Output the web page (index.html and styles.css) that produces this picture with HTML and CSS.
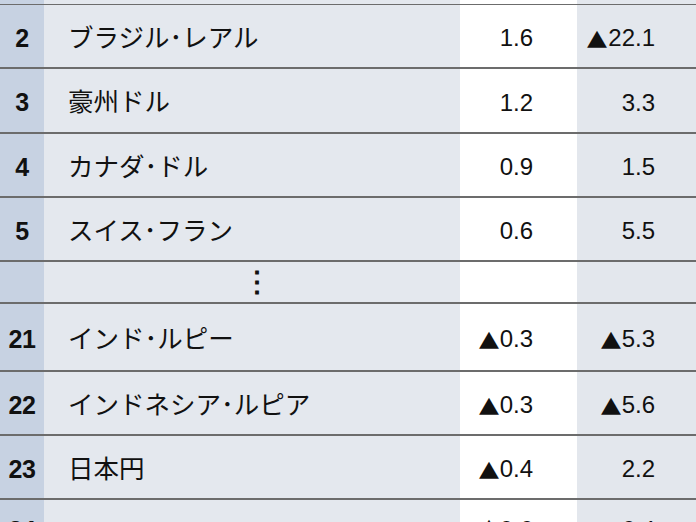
FILE: index.html
```html
<!DOCTYPE html>
<html lang="ja">
<head>
<meta charset="utf-8">
<link rel="stylesheet" href="styles.css">
</head>
<body>
<div class="table">
  <div class="row stub"><div class="rank"></div><div class="name"></div><div class="v1"></div><div class="v2"></div></div>
  <div class="row"><div class="rank">2</div><div class="name">ブラジル･レアル</div><div class="v1">1.6</div><div class="v2"><span class="tri">▲</span>22.1</div></div>
  <div class="row r65"><div class="rank">3</div><div class="name">豪州ドル</div><div class="v1">1.2</div><div class="v2">3.3</div></div>
  <div class="row"><div class="rank">4</div><div class="name">カナダ･ドル</div><div class="v1">0.9</div><div class="v2">1.5</div></div>
  <div class="row"><div class="rank">5</div><div class="name">スイス･フラン</div><div class="v1">0.6</div><div class="v2">5.5</div></div>
  <div class="row gap"><div class="rank"></div><div class="name ellipsis">⋮</div><div class="v1"></div><div class="v2"></div></div>
  <div class="row r68"><div class="rank">21</div><div class="name">インド･ルピー</div><div class="v1"><span class="tri">▲</span>0.3</div><div class="v2"><span class="tri">▲</span>5.3</div></div>
  <div class="row"><div class="rank">22</div><div class="name">インドネシア･ルピア</div><div class="v1"><span class="tri">▲</span>0.3</div><div class="v2"><span class="tri">▲</span>5.6</div></div>
  <div class="row"><div class="rank">23</div><div class="name">日本円</div><div class="v1"><span class="tri">▲</span>0.4</div><div class="v2">2.2</div></div>
  <div class="row last"><div class="rank">24</div><div class="name">トルコ･リラ</div><div class="v1"><span class="tri">▲</span>0.6</div><div class="v2">6.4</div></div>
</div>
</body>
</html>
```
FILE: styles.css
```css
html, body {
  margin: 0;
  padding: 0;
  width: 696px;
  height: 522px;
  overflow: hidden;
  background: #e4e8ee;
}

.table {
  display: flex;
  flex-direction: column;
  width: 696px;
}

.row {
  display: grid;
  grid-template-columns: 44px 416px 117px 119px;
  height: 64px;
  box-sizing: border-box;
  border-bottom: 2px solid #6c6c6c;
}

.row.stub { height: 5px; }
.row.r65 { height: 65px; }
.row.r68 { height: 68px; }
.row.gap { height: 42px; }
.row.last { height: 22px; border-bottom: none; }

.row > div {
  display: flex;
  align-items: center;
  padding-top: 4px;
  box-sizing: border-box;
  color: #111;
}

.row.last > div {
  align-items: flex-start;
  padding-top: 16px;
  overflow: hidden;
}

.rank {
  background: #c7d2e2;
  justify-content: center;
  font-family: "Liberation Sans", Arial, sans-serif;
  font-weight: bold;
  font-size: 25px;
  letter-spacing: -0.5px;
}

.name {
  background: #e4e8ee;
  padding-left: 24px;
  font-family: "Noto Sans CJK JP", "Liberation Sans", sans-serif;
  font-size: 25.5px;
  line-height: 1.2;
}

.row > .name {
  padding-top: 0;
}

.row > .ellipsis {
  justify-content: center;
  align-items: center;
  padding: 0 0 6px 10px;
  font-size: 28px;
  font-weight: bold;
  line-height: 1;
}

.v1 {
  background: #ffffff;
  justify-content: flex-end;
  padding-right: 44px;
  font-family: "Liberation Sans", Arial, sans-serif;
  font-size: 24px;
}

.v2 {
  background: #e3e7ed;
  justify-content: flex-end;
  padding-right: 41px;
  font-family: "Liberation Sans", Arial, sans-serif;
  font-size: 24px;
}

.tri {
  display: inline-block;
  font-family: "DejaVu Sans", sans-serif;
  font-size: 22px;
  line-height: 1;
  transform: scaleX(1.18);
  transform-origin: right bottom;
  margin-right: 1px;
}
```
